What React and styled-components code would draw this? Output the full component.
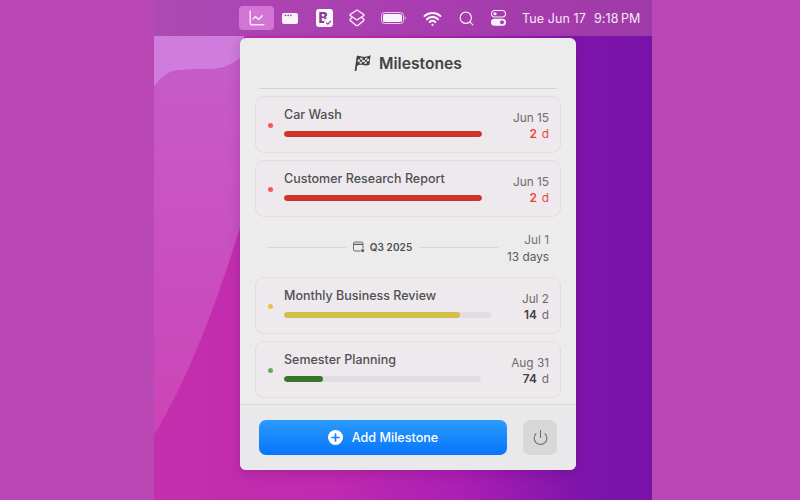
import styled, { createGlobalStyle } from "styled-components";
import { ChartLine, Search, Wifi, Power } from "lucide-react";

const milestonesTop = [
  { id: 1, title: "Car Wash", date: "Jun 15", days: 2, tone: "#f25a58", bar: "#cf3327", progress: 100, track: 198, overdue: true },
  { id: 2, title: "Customer Research Report", date: "Jun 15", days: 2, tone: "#f25a58", bar: "#cf3327", progress: 100, track: 198, overdue: true },
];

const milestonesBottom = [
  { id: 3, title: "Monthly Business Review", date: "Jul 2", days: 14, tone: "#e6c14d", bar: "#d2bf4c", progress: 85, track: 207 },
  { id: 4, title: "Semester Planning", date: "Aug 31", days: 74, tone: "#6aa95c", bar: "#39752f", progress: 20, track: 197 },
];

const GlobalStyle = createGlobalStyle`
  html, body {
    margin: 0;
    padding: 0;
    background: #b947b4;
  }
  body {
    font-family: Inter, "Liberation Sans", sans-serif;
    -webkit-font-smoothing: antialiased;
  }
`;

const Page = styled.div`
  width: 800px;
  height: 500px;
  display: flex;
  justify-content: center;
  overflow: hidden;
  background: #b947b4;
`;

const Screen = styled.div`
  position: relative;
  width: 498px;
  height: 500px;
  margin-left: 6px;
  overflow: hidden;
  background: linear-gradient(90deg, #c42fae 0%, #bf2ab0 35%, #ab1fb3 62%, #7e14ab 86%, #7812a8 100%);
`;

const Wallpaper = styled.svg`
  position: absolute;
  inset: 0;
`;

const Foreground = styled.div`
  position: relative;
  display: flex;
  flex-direction: column;
`;

const MenuBar = styled.div`
  height: 36px;
  display: flex;
  align-items: center;
  padding-left: 85px;
  background: linear-gradient(90deg, #ae4ab4, #a93eb0 50%, #a03aa8);
  color: #fff;
`;

const Slot = styled.div`
  width: ${(p) => p.$w}px;
  height: 24px;
  display: flex;
  align-items: center;
  justify-content: center;
  border-radius: 4px;
  background: ${(p) => (p.$active ? "rgba(235, 150, 235, 0.6)" : "transparent")};
`;

const Clock = styled.div`
  margin-left: 8px;
  display: flex;
  gap: 8px;
  font-size: 12.5px;
  letter-spacing: 0.1px;
  color: #f6e6f6;
  white-space: nowrap;
`;

const BadgeIcon = styled.div`
  position: relative;
  width: 17px;
  height: 18px;
  border-radius: 3px;
  background: #fbf8fb;
  color: #8c3a92;
  font-size: 14px;
  font-weight: 800;
  line-height: 18px;
  padding-left: 3px;
  box-sizing: border-box;
`;

const BadgeCheck = styled.svg`
  position: absolute;
  right: 0;
  bottom: 0;
`;

const Popup = styled.div`
  width: 336px;
  height: 432px;
  margin: 2px 0 0 86px;
  display: flex;
  flex-direction: column;
  border-radius: 6px;
  background: #ececec;
  box-shadow: 0 3px 12px rgba(60, 0, 70, 0.2);
  overflow: hidden;
`;

const Header = styled.div`
  height: 51px;
  margin: 0 19px;
  box-sizing: border-box;
  display: flex;
  align-items: center;
  justify-content: center;
  gap: 8px;
  border-bottom: 1px solid #d4d3d3;
  color: #444;
  font-size: 15.7px;
  font-weight: 600;
`;

const List = styled.div`
  flex: 1;
  display: flex;
  flex-direction: column;
  gap: 7px;
  padding: 7px 15px 0;
`;

const Card = styled.div`
  height: 57px;
  box-sizing: border-box;
  display: flex;
  align-items: flex-start;
  padding: 10px 11px 0 12px;
  border: 1px solid #e1dee1;
  border-radius: 9px;
  background: #ede9ed;
`;

const Dot = styled.span`
  width: 5px;
  height: 5px;
  margin: 16px 11px 0 0;
  flex: none;
  border-radius: 50%;
  background: ${(p) => p.$color};
`;

const Body = styled.div`
  flex: 1;
  display: flex;
  flex-direction: column;
  gap: 8px;
`;

const Title = styled.div`
  font-size: 12.5px;
  line-height: 16px;
  font-weight: 500;
  color: #505052;
`;

const Track = styled.div`
  width: ${(p) => p.$w}px;
  height: 6px;
  border-radius: 3px;
  background: #e1dde1;
  overflow: hidden;
`;

const Fill = styled.div`
  height: 100%;
  border-radius: 3px;
  background: ${(p) => p.$color};
`;

const Meta = styled.div`
  display: flex;
  flex-direction: column;
  align-items: flex-end;
  gap: 1px;
  margin-top: 4px;
  font-size: 11.8px;
  line-height: 15px;
  color: #6c6b6d;
`;

const Days = styled.div`
  display: flex;
  gap: 5px;
  color: ${(p) => (p.$overdue ? "#e8443a" : "#6c6b6d")};
  b {
    font-weight: 600;
    color: ${(p) => (p.$overdue ? "#e8443a" : "#3f3e40")};
  }
`;

const Quarter = styled.div`
  height: 46px;
  display: flex;
  align-items: center;
  padding: 0 12px;
`;

const Rule = styled.span`
  flex: none;
  width: 79px;
  height: 1px;
  background: #d9d8d8;
`;

const QuarterLabel = styled.div`
  width: 73px;
  flex: none;
  display: flex;
  align-items: center;
  justify-content: center;
  gap: 5px;
  font-size: 10px;
  font-weight: 600;
  letter-spacing: 0.1px;
  color: #4f4e50;
`;

const QuarterMeta = styled(Meta)`
  margin: 4px 0 0 auto;
  gap: 2px;
  color: #5b5a5c;
  span:first-child {
    color: #757476;
  }
`;

const Footer = styled.div`
  height: 66px;
  box-sizing: border-box;
  display: flex;
  gap: 16px;
  padding: 15px 19px 0;
  border-top: 1px solid #d8d7d7;
  background: #e9e8ea;
`;

const AddButton = styled.button`
  width: 248px;
  height: 35px;
  display: flex;
  align-items: center;
  justify-content: center;
  gap: 9px;
  padding: 0;
  border: none;
  border-radius: 7px;
  background: linear-gradient(180deg, #2b9bfd 0%, #0675fb 100%);
  color: #fff;
  font-family: inherit;
  font-size: 12.6px;
  font-weight: 500;
`;

const PowerButton = styled.button`
  width: 34px;
  height: 35px;
  display: flex;
  align-items: center;
  justify-content: center;
  padding: 0;
  border: none;
  border-radius: 7px;
  background: #d9d7d8;
  color: #6b6a6b;
`;

const FlagIcon = () => (
  <svg width="17" height="16" viewBox="0 0 17 16">
    <path d="M1.6 15.5L3.6 1.4" stroke="#444" strokeWidth="1.8" strokeLinecap="round" />
    <path d="M3.4 1.4C6.5 0 8.5 2.4 11.2 1.8C13 1.4 14.6 1 16.6 0.2L15.4 9.8C12.8 11 10.8 10.6 8.8 10.1C6.8 9.6 4.8 9.9 2.4 11.2Z" fill="#444" />
    <path d="M6.4 2.4L8.6 2.9L8.3 4.9L6.1 4.5ZM11.2 3L13.4 2.6L13.1 4.6L10.9 5ZM8.3 4.9L10.9 5L10.6 7L8 6.9ZM13.1 4.6L15.3 3.8L15 5.9L12.8 6.6ZM3.9 4.6L6.1 4.5L5.8 6.6L3.6 6.9ZM5.8 6.6L8 6.9L7.7 8.8L5.5 8.6ZM10.6 7L12.8 6.6L12.5 8.7L10.3 9.1Z" fill="#ececec" />
  </svg>
);

const WindowIcon = () => (
  <svg width="16" height="11" viewBox="0 0 16 11">
    <rect width="16" height="11" rx="2" fill="#fbf3fb" />
    <circle cx="3.5" cy="2.4" r="0.8" fill="#8c3a92" />
    <circle cx="6.2" cy="2.4" r="0.8" fill="#8c3a92" />
    <circle cx="8.9" cy="2.4" r="0.8" fill="#8c3a92" />
  </svg>
);

const LayersIcon = () => (
  <svg width="16" height="18" viewBox="0 0 16 18" fill="none" stroke="#f6e6f6" strokeWidth="1.4" strokeLinejoin="round">
    <path d="M8 1 L14.6 5.3 Q15.4 6 14.6 6.7 L8 11 L1.4 6.7 Q.6 6 1.4 5.3 Z" />
    <path d="M3.2 8.6 L1.4 10 Q.6 10.8 1.4 11.6 L6.8 16.2 Q8 17 9.2 16.2 L14.6 11.6 Q15.4 10.8 14.6 10 L12.8 8.6" />
  </svg>
);

const BatteryIcon = () => (
  <svg width="25" height="12" viewBox="0 0 25 12">
    <rect x="0.5" y="0.5" width="22" height="11" rx="3" fill="none" stroke="#e9c6ea" />
    <rect x="2" y="2" width="19" height="8" rx="1.6" fill="#fbf3fb" />
    <path d="M23.7 4.2 Q25 5 25 6 Q25 7 23.7 7.8 Z" fill="#d9a6dc" />
  </svg>
);

const ControlIcon = () => (
  <svg width="15" height="16" viewBox="0 0 15 16">
    <rect x="0.5" y="0.5" width="14" height="6.5" rx="3.25" fill="none" stroke="#fbf3fb" strokeWidth="1.1" />
    <circle cx="4" cy="3.75" r="1.6" fill="#fbf3fb" />
    <rect y="8.8" width="15" height="7" rx="3.5" fill="#fbf3fb" />
    <circle cx="11" cy="12.3" r="2" fill="#9a4aa2" />
  </svg>
);

const CalendarIcon = () => (
  <svg width="12" height="12" viewBox="0 0 12 12" fill="none" stroke="#5c5b5d" strokeWidth="0.9">
    <rect x="0.5" y="1" width="9.5" height="9" rx="1.5" />
    <path d="M0.5 3.4H10" strokeWidth="1.4" />
    <circle cx="9.6" cy="9.6" r="2" fill="#5c5b5d" stroke="#ececec" />
  </svg>
);

const PlusIcon = () => (
  <svg width="15" height="15" viewBox="0 0 15 15">
    <circle cx="7.5" cy="7.5" r="7.5" fill="#fff" />
    <path d="M7.5 4v7M4 7.5h7" stroke="#1583fb" strokeWidth="1.7" strokeLinecap="round" />
  </svg>
);

const MilestoneCard = ({ item }) => (
  <Card>
    <Dot $color={item.tone} />
    <Body>
      <Title>{item.title}</Title>
      <Track $w={item.track}>
        <Fill $color={item.bar} style={{ width: `${item.progress}%` }} />
      </Track>
    </Body>
    <Meta>
      <span>{item.date}</span>
      <Days $overdue={item.overdue}>
        <b>{item.days}</b>
        <span>d</span>
      </Days>
    </Meta>
  </Card>
);

const App = () => {
  return (
    <Page>
      <GlobalStyle />
      <Screen>
        <Wallpaper width="498" height="500" viewBox="0 0 498 500">
          <defs>
            <linearGradient id="midTone" x1="0" y1="0" x2="0" y2="1">
              <stop offset="0" stopColor="#c65cc8" />
              <stop offset="1" stopColor="#cc44b6" />
            </linearGradient>
          </defs>
          <path d="M0 36H90V56C78 64 72 68 60 69C40 70 30 69 20 71C10 74 4 82 0 87Z" fill="#cf7cdc" />
          <path d="M0 87C4 82 10 74 20 71C30 69 40 70 60 69C72 68 78 64 90 56V215C70 280 40 370 0 435Z" fill="url(#midTone)" />
        </Wallpaper>
        <Foreground>
          <MenuBar>
            <Slot $w={35} $active>
              <ChartLine size={18} color="#f6e6f6" strokeWidth={2} />
            </Slot>
            <Slot $w={32}>
              <WindowIcon />
            </Slot>
            <Slot $w={36}>
              <BadgeIcon>
                B
                <BadgeCheck width="9" height="9" viewBox="0 0 9 9">
                  <circle cx="4.5" cy="4.5" r="4.5" fill="#fbf8fb" />
                  <path d="M2.2 4.6L3.9 6.2L6.8 2.9" fill="none" stroke="#8c3a92" strokeWidth="1.1" />
                </BadgeCheck>
              </BadgeIcon>
            </Slot>
            <Slot $w={30}>
              <LayersIcon />
            </Slot>
            <Slot $w={42}>
              <BatteryIcon />
            </Slot>
            <Slot $w={36}>
              <Wifi size={19} color="#fbf3fb" strokeWidth={2.7} />
            </Slot>
            <Slot $w={32}>
              <Search size={17} color="#f6e6f6" strokeWidth={1.7} />
            </Slot>
            <Slot $w={32}>
              <ControlIcon />
            </Slot>
            <Clock>
              <span>Tue Jun 17</span>
              <span>9:18{"\u2009"}PM</span>
            </Clock>
          </MenuBar>
          <Popup>
            <Header>
              <FlagIcon />
              Milestones
            </Header>
            <List>
              {milestonesTop.map((item) => (
                <MilestoneCard key={item.id} item={item} />
              ))}
              <Quarter>
                <Rule />
                <QuarterLabel>
                  <CalendarIcon />
                  Q3 2025
                </QuarterLabel>
                <Rule />
                <QuarterMeta>
                  <span>Jul 1</span>
                  <span>13 days</span>
                </QuarterMeta>
              </Quarter>
              {milestonesBottom.map((item) => (
                <MilestoneCard key={item.id} item={item} />
              ))}
            </List>
            <Footer>
              <AddButton>
                <PlusIcon />
                Add Milestone
              </AddButton>
              <PowerButton>
                <Power size={17} strokeWidth={1.5} />
              </PowerButton>
            </Footer>
          </Popup>
        </Foreground>
      </Screen>
    </Page>
  );
};

export default App;
